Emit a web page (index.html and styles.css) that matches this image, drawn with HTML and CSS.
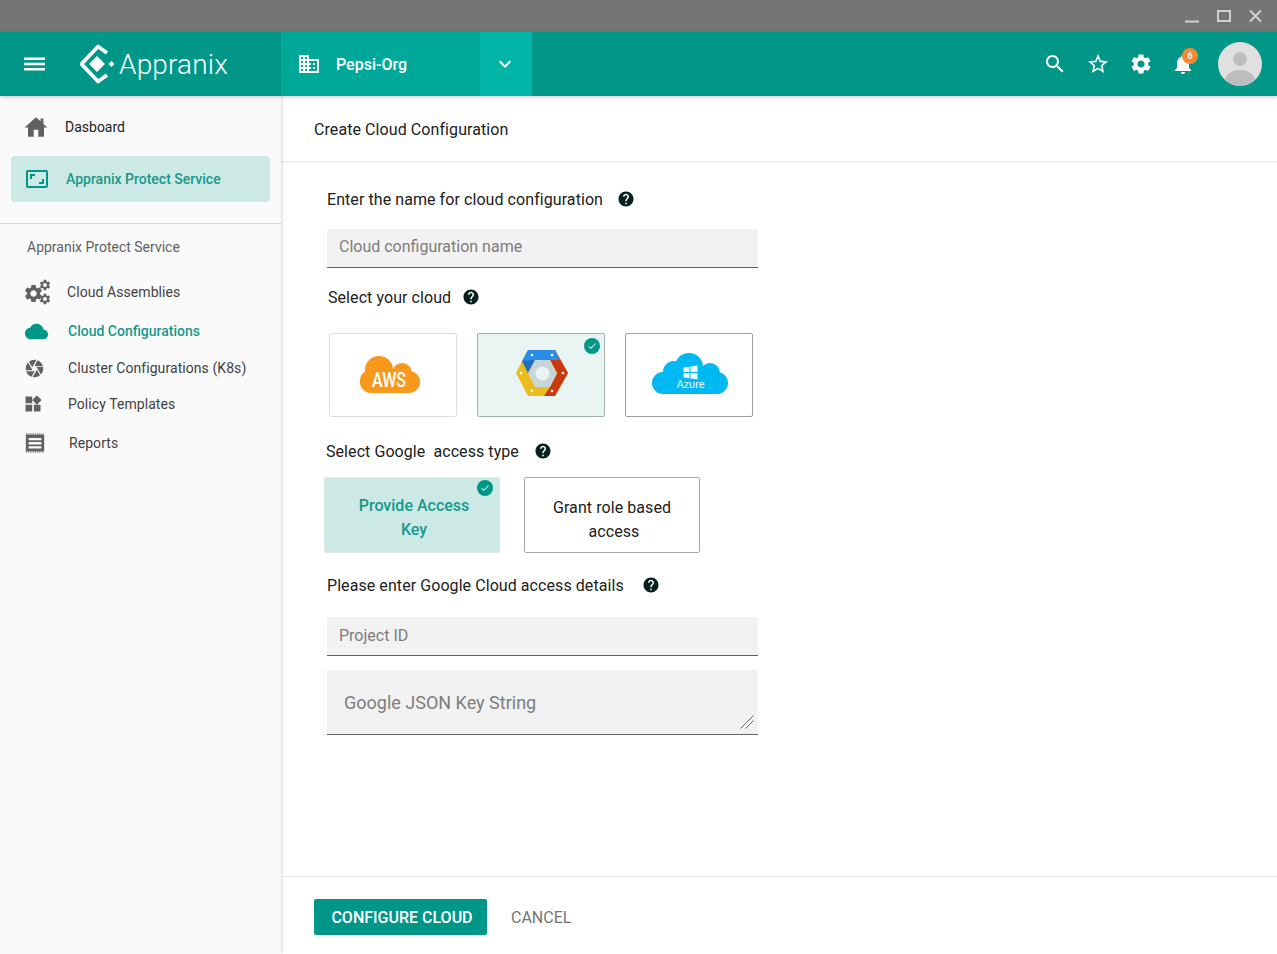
FILE: index.html
```html
<!DOCTYPE html>
<html lang="en">
<head>
<meta charset="utf-8">
<title>Appranix</title>
<link rel="stylesheet" href="styles.css">
</head>
<body>
<svg class="sprite" width="0" height="0" aria-hidden="true">
  <symbol id="i-help" viewBox="0 0 24 24"><path d="M12 2C6.48 2 2 6.48 2 12s4.48 10 10 10 10-4.48 10-10S17.52 2 12 2zm1 17h-2v-2h2v2zm2.07-7.75l-.9.92C13.45 12.9 13 13.5 13 15h-2v-.5c0-1.1.45-2.1 1.17-2.83l1.24-1.26c.37-.36.59-.86.59-1.41 0-1.1-.9-2-2-2s-2 .9-2 2H8c0-2.21 1.79-4 4-4s4 1.79 4 4c0 .88-.36 1.68-.93 2.25z"/></symbol>
  <symbol id="i-gear" viewBox="0 0 24 24" overflow="visible"><path d="M19.14 12.94c.04-.3.06-.61.06-.94 0-.32-.02-.64-.07-.94l2.03-1.58c.18-.14.23-.41.12-.61l-1.92-3.32c-.12-.22-.37-.29-.59-.22l-2.39.96c-.5-.38-1.03-.7-1.62-.94l-.36-2.54c-.04-.24-.24-.41-.48-.41h-3.84c-.24 0-.43.17-.47.41l-.36 2.54c-.59.24-1.13.57-1.62.94l-2.39-.96c-.22-.08-.47 0-.59.22L2.74 8.87c-.12.21-.08.47.12.61l2.03 1.58c-.05.3-.09.63-.09.94s.02.64.07.94l-2.03 1.58c-.18.14-.23.41-.12.61l1.92 3.32c.12.22.37.29.59.22l2.39-.96c.5.38 1.03.7 1.62.94l.36 2.54c.05.24.24.41.48.41h3.84c.24 0 .44-.17.47-.41l.36-2.54c.59-.24 1.13-.56 1.62-.94l2.39.96c.22.08.47 0 .59-.22l1.92-3.32c.12-.22.07-.47-.12-.61l-2.01-1.58zM12 15.6c-1.98 0-3.6-1.62-3.6-3.6s1.62-3.6 3.6-3.6 3.6 1.62 3.6 3.6-1.62 3.6-3.6 3.6z"/></symbol>
  <symbol id="i-check" viewBox="0 0 24 24"><path d="M9 16.17L4.83 12l-1.42 1.41L9 19 21 7l-1.41-1.41z"/></symbol>
</svg>

<div class="titlebar">
  <svg class="win-controls" width="78" height="14" viewBox="0 0 78 14" fill="none" stroke="#d0d0d0" stroke-width="2">
    <path d="M0 12.5h14"/>
    <rect x="33" y="2" width="12" height="10"/>
    <path d="M65 1.5l11 11M76 1.5l-11 11"/>
  </svg>
</div>

<header class="appbar">
  <div class="brand">
    <svg class="ico-menu" width="24" height="24" viewBox="0 0 24 24" fill="#fff"><path d="M2 18.500h21v-2.400H2zm0-5.300h21v-2.400H2zM2 5.500v2.400h21V5.500z"/></svg>
    <svg class="logo" width="38" height="40" viewBox="0 0 38 40" fill="none"><path d="M27 9L18 2.500 1.500 20 18 37.500 27 31" stroke="#fff" stroke-width="3.800" stroke-linejoin="round"/><path d="M17 12l8 8-8 8-8-8zM31.500 17l3 3-3 3-3-3z" fill="#fff"/></svg>
    <span class="brand-name">Appranix</span>
  </div>
  <div class="org">
    <svg class="ico-org" width="24" height="24" viewBox="0 0 24 24" fill="#fff"><path d="M12 7V3H2v18h20V7H12zM6 19H4v-2h2v2zm0-4H4v-2h2v2zm0-4H4V9h2v2zm0-4H4V5h2v2zm4 12H8v-2h2v2zm0-4H8v-2h2v2zm0-4H8V9h2v2zm0-4H8V5h2v2zm10 12h-8v-2h2v-2h-2v-2h2v-2h-2V9h8v10zm-2-8h-2v2h2v-2zm0 4h-2v2h2v-2z"/></svg>
    <span class="org-name">Pepsi-Org</span>
  </div>
  <div class="org-toggle">
    <svg width="24" height="24" viewBox="0 0 24 24" fill="#fff"><path d="M7.41 8.59L12 13.17l4.59-4.58L18 10l-6 6-6-6 1.41-1.41z"/></svg>
  </div>
  <div class="actions">
    <svg width="24" height="24" viewBox="0 0 24 24" fill="#fff"><path d="M15.5 14h-.79l-.28-.27C15.41 12.59 16 11.11 16 9.5 16 5.910 13.090 3 9.5 3S3 5.910 3 9.5 5.910 16 9.5 16c1.610 0 3.090-.59 4.230-1.570l.27.28v.79l5 4.990L20.490 19l-4.990-5zm-6 0C7.010 14 5 11.990 5 9.5S7.010 5 9.5 5 14 7.010 14 9.500 11.990 14 9.500 14z"/></svg>
    <svg width="24" height="24" viewBox="0 0 24 24" fill="#fff"><path d="M22 9.240l-7.190-.62L12 2 9.190 8.630 2 9.240l5.460 4.730L5.820 21 12 17.270 18.180 21l-1.630-7.030L22 9.240zM12 15.400l-3.760 2.270 1-4.280-3.320-2.880 4.380-.38L12 6.100l1.710 4.040 4.380.38-3.320 2.880 1 4.280L12 15.400z"/></svg>
    <svg width="24" height="24" fill="#fff"><use href="#i-gear"/></svg>
    <div class="bell">
      <svg width="24" height="24" viewBox="0 0 24 24" fill="#fff"><path d="M12 22c1.100 0 2-.9 2-2h-4c0 1.100.89 2 2 2zm6-6v-5c0-3.070-1.640-5.640-4.500-6.320V4c0-.83-.67-1.500-1.500-1.500s-1.500.67-1.500 1.500v.68C7.630 5.360 6 7.920 6 11v5l-2 2v1h16v-1l-2-2z"/></svg>
      <span class="badge">6</span>
    </div>
    <svg class="avatar" width="44" height="44" viewBox="0 0 44 44"><defs><clipPath id="av"><circle cx="22" cy="22" r="22"/></clipPath></defs><circle cx="22" cy="22" r="22" fill="#e0e0e0"/><g clip-path="url(#av)" fill="#bdbdbd"><circle cx="22" cy="17" r="7"/><ellipse cx="22" cy="39" rx="15" ry="11"/></g></svg>
  </div>
</header>

<div class="main">
  <aside class="sidebar">
    <a class="nav-top">
      <svg width="24" height="24" viewBox="1.500 2 21 20" fill="#616161"><path d="M10 20.500v-6h4v6h5v-8h3L18.500 9.300V4.500h-2.500v2.500L12 3.500 2 12.500h3v8z"/></svg>
      <span>Dasboard</span>
    </a>
    <a class="nav-active">
      <svg width="24" height="24" viewBox="0 0 24 24" fill="#009688"><path d="M19 12h-2v3h-3v2h5v-5zM7 9h3V7H5v5h2V9zm14-6H3c-1.100 0-2 .9-2 2v14c0 1.100.9 2 2 2h18c1.100 0 2-.9 2-2V5c0-1.100-.9-2-2-2zm0 16.010H3V4.990h18v14.020z"/></svg>
      <span>Appranix Protect Service</span>
    </a>
    <hr class="divider">
    <div class="section-title">Appranix Protect Service</div>
    <nav class="subnav">
      <a class="sub sub-a">
        <svg class="sub-ico" width="26" height="26" viewBox="0 0 26 26" fill="#616161"><use href="#i-gear" x="-2.250" y="3.750" width="21.500" height="21.500"/><use href="#i-gear" x="13.500" y="-.5" width="13" height="13"/><use href="#i-gear" x="13.500" y="13.500" width="13" height="13"/></svg>
        <span>Cloud Assemblies</span>
      </a>
      <a class="sub sub-b current">
        <svg class="sub-ico" width="23" height="23" viewBox="0 0 24 24" fill="#009688"><path d="M19.350 10.040C18.670 6.590 15.640 4 12 4 9.110 4 6.600 5.640 5.350 8.040 2.340 8.360 0 10.910 0 14c0 3.310 2.690 6 6 6h13c2.760 0 5-2.240 5-5 0-2.640-2.050-4.780-4.650-4.960z"/></svg>
        <span>Cloud Configurations</span>
      </a>
      <a class="sub sub-c">
        <svg class="sub-ico" width="21" height="21" viewBox="0 0 24 24" fill="#616161"><path d="M9.400 10.500l4.770-8.260C13.470 2.090 12.750 2 12 2c-2.400 0-4.600.85-6.320 2.250l3.660 6.350.06-.1zM21.540 9c-.92-2.920-3.150-5.260-6-6.340L11.880 9h9.660zm.26 1h-7.490l.29.5 4.760 8.250C21 16.970 22 14.610 22 12c0-.69-.07-1.350-.2-2zM8.540 12l-3.900-6.750C3.010 7.030 2 9.390 2 12c0 .69.07 1.350.2 2h7.490l-1.150-2zm-6.080 3c.92 2.920 3.150 5.260 6 6.340L12.120 15H2.460zm11.270 0l-3.900 6.760c.7.15 1.420.24 2.170.24 2.400 0 4.600-.85 6.320-2.250l-3.660-6.350-.93 1.600z"/></svg>
        <span>Cluster Configurations (K8s)</span>
      </a>
      <a class="sub sub-d">
        <svg class="sub-ico" width="20" height="20" viewBox="0 0 24 24" fill="#616161"><path d="M13 13v8h8v-8h-8zM3 21h8v-8H3v8zM3 3v8h8V3H3zm13.660-1.310L11 7.340 16.660 13l5.660-5.660-5.660-5.650z"/></svg>
        <span>Policy Templates</span>
      </a>
      <a class="sub sub-e">
        <svg class="sub-ico" width="22" height="22" viewBox="0 0 24 24" fill="#616161"><path fill-rule="evenodd" d="M2 3h20v18H2zM5 6.500v2.500h14V6.500zm0 4.500v2.500h14V11zm0 4.500V18h14v-2.500z"/><path d="M2 2.300H22M2 21.700H22" stroke="#616161" stroke-width="1.400" stroke-dasharray="1.400 1" fill="none"/></svg>
        <span>Reports</span>
      </a>
    </nav>
  </aside>

  <section class="content">
    <div class="content-head">Create Cloud Configuration</div>
    <form class="form">
      <div class="label label-1">Enter the name for cloud configuration <svg class="help" width="18" height="18"><use href="#i-help"/></svg></div>
      <input class="field field-1" type="text" placeholder="Cloud configuration name">
      <div class="label label-2">Select your cloud <svg class="help" width="18" height="18"><use href="#i-help"/></svg></div>
      <div class="clouds">
        <div class="cloud cloud-aws">
          <svg width="126" height="82" viewBox="0 0 126 82">
            <g fill="#f8981d"><rect x="30" y="37" width="60" height="22" rx="11"/><circle cx="49" cy="36" r="14"/><circle cx="40" cy="46" r="10"/><circle cx="72" cy="39" r="10"/><circle cx="80" cy="48" r="10"/></g>
            <text class="aws-text" x="59" y="53" text-anchor="middle" textLength="34" lengthAdjust="spacingAndGlyphs">AWS</text>
          </svg>
        </div>
        <div class="cloud cloud-gcp">
          <svg width="126" height="82" viewBox="0 0 126 82">
            <polygon points="50,16 77,16 90,39 77,62 50,62 38,39" fill="#ecbc1c"/>
            <polygon points="66,62 72,53 79,39 72,26 77,16 90,39 77,62" fill="#c9390f"/>
            <polygon points="50,16 77,16 82,26 57,26 51,36 44,27" fill="#2a8de8"/>
            <polygon points="44,27 57,26 50,39" fill="#1f6fc0"/>
            <polygon points="57,26 72,26 79,39.500 72,53 57,53 50,39.500" fill="#c6d6d8"/>
            <circle cx="64.500" cy="39.500" r="7" fill="#e9f3f2"/>
            <g fill="#fff"><circle cx="54" cy="21" r="1.300"/><circle cx="74" cy="21" r="1.300"/><circle cx="85" cy="39" r="1.300"/><circle cx="74" cy="57" r="1.300"/><circle cx="54" cy="57" r="1.300"/><circle cx="43" cy="39" r="1.300"/></g>
          </svg>
          <span class="tick"><svg width="10" height="10" fill="#fff"><use href="#i-check"/></svg></span>
        </div>
        <div class="cloud cloud-azure">
          <svg width="126" height="82" viewBox="0 0 126 82">
            <g fill="#00b9f2"><rect x="26" y="38" width="76" height="22" rx="11"/><circle cx="63" cy="33" r="14"/><circle cx="48" cy="38" r="11"/><circle cx="84" cy="39" r="10"/></g>
            <path d="M57.500 33.500l6-.8v5.300h-6zm7-1l7-1v6.500h-7zM57.500 39h6v5.300l-6-.8zm7 0h7v6.500l-7-1z" fill="#eafaff"/>
            <text class="azure-text" x="64.500" y="54" text-anchor="middle">Azure</text>
          </svg>
        </div>
      </div>
      <div class="label label-3">Select Google&nbsp; access type <svg class="help" width="18" height="18"><use href="#i-help"/></svg></div>
      <div class="access">
        <div class="access-card access-on">Provide Access<br>Key<span class="tick"><svg width="10" height="10" fill="#fff"><use href="#i-check"/></svg></span></div>
        <div class="access-card">Grant role based<br><span class="nudge">access</span></div>
      </div>
      <div class="label label-4">Please enter Google Cloud access details <svg class="help" width="18" height="18"><use href="#i-help"/></svg></div>
      <input class="field field-2" type="text" placeholder="Project ID">
      <div class="json-wrap">
        <textarea class="json" placeholder="Google JSON Key String"></textarea>
        <svg class="grip" width="14" height="14" viewBox="0 0 14 14" fill="none" stroke="#666" stroke-width="1"><path d="M13.500 .5L.5 13.500M13.500 5.500L5.500 13.500"/></svg>
      </div>
    </form>
    <div class="footer">
      <button class="btn-primary" type="button">CONFIGURE CLOUD</button>
      <button class="btn-text" type="button">CANCEL</button>
    </div>
  </section>
</div>
</body>
</html>
```

FILE: styles.css
```css
* { box-sizing: border-box; }
html, body { margin: 0; height: 100%; }
body {
  display: flex;
  flex-direction: column;
  height: 954px;
  overflow: hidden;
  font-family: Roboto, "Liberation Sans", sans-serif;
  font-size: 14px;
  color: #212121;
  background: #fff;
}
.sprite { position: absolute; }
.titlebar {
  flex: 0 0 32px;
  background: #757575;
  display: flex;
  justify-content: flex-end;
  align-items: flex-start;
  padding: 9px 14px 0 0;
}
.appbar {
  flex: 0 0 64px;
  display: flex;
  align-items: stretch;
  background: #009688;
  color: #fff;
  position: relative;
  z-index: 3;
  box-shadow: 0 1px 4px rgba(0,0,0,.22);
}
.brand {
  width: 281px;
  display: flex;
  align-items: center;
  padding-left: 22px;
}
.ico-menu { flex: none; }
.logo { margin-left: 34px; flex: none; }
.brand-name { margin-left: 1px; font-size: 28px; font-weight: 300; letter-spacing: .15px; }
.org {
  width: 199px;
  display: flex;
  align-items: center;
  padding-left: 16px;
  background: #00a899;
}
.org-name { margin-left: 15px; font-size: 16px; font-weight: 500; }
.org-toggle {
  width: 52px;
  display: flex;
  align-items: center;
  justify-content: center;
  padding-right: 2px;
  background: #00b5a5;
}
.actions {
  margin-left: auto;
  display: flex;
  align-items: center;
  gap: 19px;
  padding-right: 15px;
}
.bell { position: relative; width: 24px; height: 24px; margin-left: -1px; }
.bell svg { display: block; }
.badge {
  position: absolute;
  left: 11px;
  top: -4px;
  width: 16px;
  height: 16px;
  border-radius: 50%;
  background: #f58a33;
  color: #fff;
  font-size: 9px;
  font-weight: 500;
  line-height: 16px;
  text-align: center;
}
.avatar { margin-left: 4px; }
.main { flex: 1; display: flex; min-height: 0; }
.sidebar {
  flex: 0 0 281px;
  background: #fafafa;
  position: relative;
  z-index: 2;
  box-shadow: 1px 0 3px rgba(0,0,0,.16);
}
.nav-top {
  display: flex;
  align-items: center;
  height: 24px;
  margin-top: 19px;
  padding-left: 24px;
  font-size: 14px;
  color: #212121;
}
.nav-top span { margin-left: 17px; }
.nav-active {
  display: flex;
  align-items: center;
  height: 46px;
  margin: 17px 11px 0;
  padding: 0 0 1px 14px;
  border-radius: 4px;
  background: #cde9e5;
  color: #16998c;
  font-weight: 500;
}
.nav-active span { margin-left: 17px; }
.divider { margin: 21px 0 0; border: 0; border-top: 1px solid #dcdcdc; }
.section-title { margin-top: 15px; padding-left: 27px; line-height: 16px; color: #616161; }
.subnav { margin-top: 25px; letter-spacing: .07px; }
.sub { display: flex; align-items: center; color: #424242; height: 24px; }
.sub-a { padding-left: 25px; gap: 16px; }
.sub-b { margin-top: 15px; padding-left: 25px; gap: 20px; }
.sub-c { margin-top: 13px; padding-left: 24px; gap: 23px; }
.sub-d { margin-top: 12px; padding-left: 23px; gap: 25px; }
.sub-e { margin-top: 15px; padding-left: 24px; gap: 23px; }
.current { color: #16998c; font-weight: 500; letter-spacing: 0; }
.sub-ico { flex: none; overflow: visible; }
.content { flex: 1; display: flex; flex-direction: column; min-width: 0; }
.content-head {
  flex: 0 0 66px;
  display: flex;
  align-items: center;
  padding: 2px 0 0 33px;
  font-size: 16px;
  letter-spacing: .08px;
  color: #212121;
  border-bottom: 1px solid #ececec;
  box-shadow: 0 1px 2px rgba(0,0,0,.05);
}
.form {
  flex: 1;
  display: flex;
  flex-direction: column;
  align-items: flex-start;
  padding-left: 46px;
}
.label {
  display: flex;
  align-items: center;
  height: 24px;
  font-size: 16px;
  letter-spacing: .07px;
  color: #212121;
  white-space: pre;
}
.help { fill: #06201f; flex: none; }
.label-1 { margin-top: 25px; }
.label-1 .help { margin-left: 10px; }
.label-2 { margin-top: 17px; margin-left: 1px; }
.label-2 .help { margin-left: 7px; }
.label-3 { margin-top: 22px; margin-left: -1px; }
.label-3 .help { margin-left: 11px; }
.label-4 { margin-top: 20px; }
.label-4 .help { margin-left: 14px; }
.field {
  display: block;
  width: 431px;
  height: 39px;
  padding: 0 12px;
  border: 0;
  border-bottom: 1px solid #616161;
  border-radius: 0;
  background: #f2f2f2;
  font: 400 16px Roboto, sans-serif;
  outline: 0;
}
.field::placeholder, .json::placeholder { color: #7d7d7d; opacity: 1; }
.field-1 { margin-top: 18px; padding-bottom: 3px; }
.field-2 { margin-top: 20px; padding-bottom: 2px; }
.json-wrap { position: relative; width: 431px; margin-top: 14px; }
.json {
  display: block;
  width: 431px;
  height: 65px;
  padding: 21px 17px 0;
  border: 0;
  border-bottom: 1px solid #616161;
  border-radius: 0;
  background: #f2f2f2;
  font: 400 18px Roboto, sans-serif;
  line-height: 24px;
  outline: 0;
  resize: none;
}
.grip { position: absolute; right: 4px; bottom: 6px; }
.clouds { display: flex; gap: 20px; margin: 24px 0 0 2px; }
.cloud {
  position: relative;
  width: 128px;
  height: 84px;
  border: 1px solid #9e9e9e;
  border-radius: 2px;
  background: #fff;
}
.cloud svg { display: block; }
.cloud-aws { border-color: #dedede; }
.cloud-gcp { background: #e9f5f3; border-color: #9fb3b1; }
.aws-text { fill: #fff; font: 500 20px Roboto, sans-serif; }
.azure-text { fill: #e6f8ff; font: 400 11px Roboto, sans-serif; }
.tick {
  position: absolute;
  top: 4px;
  right: 4px;
  width: 16px;
  height: 16px;
  border-radius: 50%;
  background: #009688;
  display: flex;
  align-items: center;
  justify-content: center;
}
.access { display: flex; gap: 24px; margin: 14px 0 0 -3px; }
.access-card {
  position: relative;
  width: 176px;
  height: 76px;
  padding-top: 18px;
  border: 1px solid #a8a8a8;
  border-radius: 2px;
  background: #fff;
  font-size: 16px;
  letter-spacing: .07px;
  line-height: 24px;
  text-align: center;
  color: #212121;
}
.access-on {
  padding-left: 4px;
  padding-top: 16px;
  background: #cde9e5;
  border-color: #dcebe9;
  color: #16998c;
  font-weight: 500;
  letter-spacing: 0;
}
.access-on .tick { top: 2px; right: 6px; }
.nudge { padding-left: 4px; }
.footer {
  flex: 0 0 78px;
  display: flex;
  align-items: flex-start;
  margin-left: 2px;
  padding: 22px 0 0 31px;
  border-top: 1px solid #e4e4e4;
}
.btn-primary {
  width: 173px;
  height: 36px;
  padding: 0 0 0 3px;
  border: 0;
  border-radius: 2px;
  background: #009688;
  color: #fff;
  font: 500 16px Roboto, sans-serif;
}
.btn-text {
  height: 36px;
  margin-left: 24px;
  padding: 0;
  border: 0;
  background: transparent;
  color: #757575;
  font: 400 16px Roboto, sans-serif;
}
```
